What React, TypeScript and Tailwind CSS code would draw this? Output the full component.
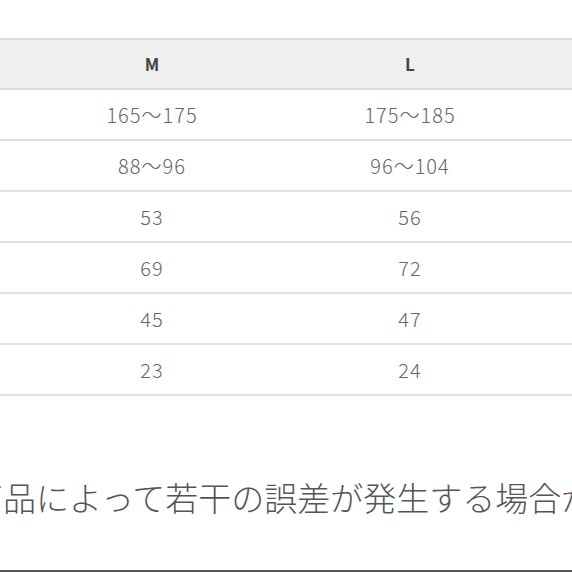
const rows: [string, string][] = [
  ["165〜175", "175〜185"],
  ["88〜96", "96〜104"],
  ["53", "56"],
  ["69", "72"],
  ["45", "47"],
  ["23", "24"],
];

const App = () => {
  return (
    <div className="w-[572px] h-[572px] overflow-hidden bg-white flex flex-col" style={{ fontFamily: '"Noto Sans CJK KR", "Noto Sans", sans-serif' }}>
      <div className="pt-[38px]">
        <div className="grid grid-cols-[23px_258px_258px_1fr] h-[52px] items-center bg-[#efefef] border-t-2 border-b-2 border-[#dcdcdc] text-[17px] font-bold text-[#444]">
          <div />
          <div className="text-center">M</div>
          <div className="text-center">L</div>
          <div />
        </div>
        {rows.map((r, i) => (
          <div key={i} className="grid grid-cols-[23px_258px_258px_1fr] h-[51px] items-center border-b-2 border-[#e0e0e0] text-[20px] font-light tracking-[1px] text-[#666]">
            <div />
            <div className="text-center">{r[0]}</div>
            <div className="text-center">{r[1]}</div>
            <div />
          </div>
        ))}
      </div>
      <div className="flex-1 flex items-center overflow-hidden">
        <p className="ml-[-30px] mt-[30px] whitespace-nowrap text-[33px] font-light text-[#555]" style={{ fontFamily: '"Noto Sans CJK JP", sans-serif' }}>
          商品によって若干の誤差が発生する場合があります。
        </p>
      </div>
      <div className="h-[2px] bg-[#555]" />
    </div>
  );
};

export default App;
